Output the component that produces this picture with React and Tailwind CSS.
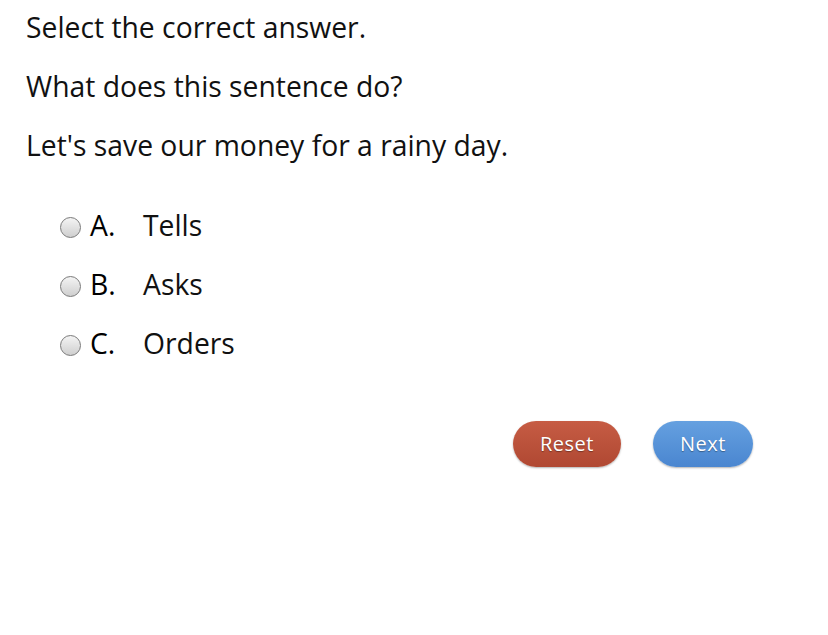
export default function App() {
  const opts = [
    ["A.", "Tells"],
    ["B.", "Asks"],
    ["C.", "Orders"],
  ];
  return (
    <div className="w-[828px] h-[635px] bg-white text-[#111] font-['Open_Sans',sans-serif]">
      <div className="pl-[26px] -mt-[2px] text-[28.3px] leading-[59px]">
        <p>Select the correct answer.</p>
        <p>What does this sentence do?</p>
        <p>Let's save our money for a rainy day.</p>
        <div className="pt-[21px] pl-[34px]">
          {opts.map(([l, t]) => (
            <div key={l} className="flex items-center h-[59px]">
              <span className="w-[21px] h-[21px] rounded-full border border-[#7a7a7a] bg-gradient-to-b from-[#f4f4f4] to-[#cfcfcf] mt-[4px]" />
              <span className="ml-[9px] w-[53px] text-black">{l}</span>
              <span>{t}</span>
            </div>
          ))}
        </div>
      </div>
      <div className="flex pl-[513px] pt-[48px] gap-[32px]">
        <button className="w-[108px] h-[46px] rounded-full bg-gradient-to-b from-[#c65c44] to-[#b04832] text-white text-[20px] tracking-[0.5px] [text-shadow:0_1px_1px_rgba(0,0,0,0.35)] shadow-[0_1px_2px_rgba(0,0,0,0.3)]">
          Reset
        </button>
        <button className="w-[100px] h-[46px] rounded-full bg-gradient-to-b from-[#65a0e0] to-[#4a86d0] text-white text-[20px] tracking-[0.5px] [text-shadow:0_1px_1px_rgba(0,0,0,0.35)] shadow-[0_1px_2px_rgba(0,0,0,0.3)]">
          Next
        </button>
      </div>
    </div>
  );
}
